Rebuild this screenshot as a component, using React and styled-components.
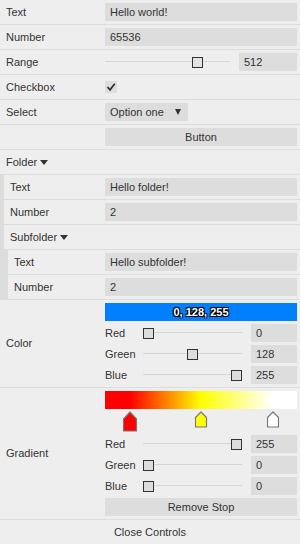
import React from "react";
import styled, { createGlobalStyle } from "styled-components";

const GlobalStyle = createGlobalStyle`
  html, body { margin: 0; padding: 0; background: #eeeeee; }
  body { font-family: "Liberation Sans", Arial, sans-serif; font-size: 11px; color: #333; }
  * { box-sizing: border-box; }
`;

const Panel = styled.div`
  width: 300px;
  background: #eeeeee;
  border-bottom: 1px solid #dddddd;
`;

const Row = styled.div`
  display: grid;
  grid-template-columns: ${(p) => p.$labelWidth}px 1fr;
  min-height: 25px;
  border-bottom: 1px solid #dddddd;
  padding-right: 3px;
`;

const Label = styled.div`
  align-self: center;
  padding-left: 6px;
  line-height: 13px;
  white-space: nowrap;
`;

const Value = styled.div`
  padding: 3px 0;
  display: flex;
  flex-direction: column;
  min-width: 0;
`;

const Field = styled.div`
  height: 18px;
  line-height: 18px;
  background: #dddddd;
  padding: 0 5px;
  white-space: nowrap;
  overflow: hidden;
`;

const RangeWrap = styled.div`
  display: grid;
  grid-template-columns: 1fr 58px;
  align-items: center;
  height: 18px;
`;

const Track = styled.div`
  position: relative;
  height: 18px;
  margin-right: 9px;
  &::before {
    content: "";
    position: absolute;
    left: 0;
    right: 0;
    top: 8px;
    height: 1px;
    background: #d6d6d6;
  }
`;

const Thumb = styled.div`
  position: absolute;
  top: 4px;
  width: 11px;
  height: 11px;
  border: 1px solid #333;
  background: ${(p) => p.$fill};
`;

const CheckBox = styled.div`
  margin-top: 3px;
  width: 12px;
  height: 12px;
  background: #dddddd;
  display: flex;
  align-items: center;
  justify-content: center;
`;

const SelectBox = styled.div`
  width: 83px;
  height: 18px;
  background: #dddddd;
  display: flex;
  align-items: center;
  justify-content: space-between;
  padding: 0 7px 0 5px;
`;

const DownTriangle = styled.span`
  display: inline-block;
  width: 0;
  height: 0;
  border-left: ${(p) => p.$w}px solid transparent;
  border-right: ${(p) => p.$w}px solid transparent;
  border-top: ${(p) => p.$h}px solid #333;
  margin-left: ${(p) => p.$ml || 0}px;
`;

const Button = styled.div`
  height: 18px;
  line-height: 18px;
  background: #dddddd;
  text-align: center;
  margin-top: ${(p) => p.$mt || 0}px;
`;

const FolderHeader = styled.div`
  height: 25px;
  border-bottom: 1px solid #dddddd;
  display: flex;
  align-items: center;
  padding-left: 6px;
`;

const FolderBody = styled.div`
  border-left: 4px solid #dddddd;
`;

const ColorBar = styled.div`
  height: 18px;
  background: rgb(0, 128, 255);
  color: #fff;
  font-weight: bold;
  text-align: center;
  line-height: 18px;
  text-shadow: -1px -1px 0 #000, 1px -1px 0 #000, -1px 1px 0 #000, 1px 1px 0 #000, 0 0 2px #000;
`;

const SubRow = styled.div`
  display: grid;
  grid-template-columns: 38px 1fr 46px;
  padding-top: 3px;
  align-items: center;
`;

const SubLabel = styled.div`
  height: 18px;
  line-height: 18px;
`;

const GradientBar = styled.div`
  height: 18px;
  background: linear-gradient(to right, #ff0000 0%, #ff0000 13%, #ffff00 50%, #ffffff 87.5%, #ffffff 100%);
`;

const StopArea = styled.div`
  position: relative;
  height: 23px;
`;

const StopMarker = styled.svg`
  position: absolute;
  top: 2px;
  transform: translateX(-50%);
  display: block;
`;

const CloseBar = styled.div`
  height: 24px;
  line-height: 24px;
  text-align: center;
`;

function TextRow({ label, value, lw }) {
  return (
    <Row $labelWidth={lw}>
      <Label>{label}</Label>
      <Value>
        <Field>{value}</Field>
      </Value>
    </Row>
  );
}

function Slider({ frac, fill = "#dddddd" }) {
  return (
    <Track>
      <Thumb $fill={fill} style={{ left: `calc(${frac * 100}% - ${frac * 11}px)` }} />
    </Track>
  );
}

function ChannelRow({ name, value }) {
  return (
    <SubRow>
      <SubLabel>{name}</SubLabel>
      <Slider frac={value / 255} />
      <Field>{value}</Field>
    </SubRow>
  );
}

function Stop({ pos, color, big }) {
  const w = big ? 15 : 13;
  const h = big ? 21 : 17;
  return (
    <StopMarker width={w} height={h} viewBox={`0 0 ${w} ${h}`} style={{ left: `${pos * 100}%` }}>
      <polygon
        points={`1,${h - 1} 1,${h * 0.38} ${w / 2},1 ${w - 1},${h * 0.38} ${w - 1},${h - 1}`}
        fill={color}
        stroke="#777"
        strokeWidth="1.2"
        strokeLinejoin="round"
      />
    </StopMarker>
  );
}

export default function App() {
  return (
    <>
      <GlobalStyle />
      <Panel>
        <TextRow label="Text" value="Hello world!" lw={105} />
        <TextRow label="Number" value="65536" lw={105} />
        <Row $labelWidth={105}>
          <Label>Range</Label>
          <Value>
            <RangeWrap>
              <Slider frac={0.765} fill="#e4e4e4" />
              <Field>512</Field>
            </RangeWrap>
          </Value>
        </Row>
        <Row $labelWidth={105}>
          <Label>Checkbox</Label>
          <Value>
            <CheckBox>
              <svg width="10" height="10" viewBox="0 0 10 10">
                <polyline points="1.5,5 4,7.8 8.8,1.8" fill="none" stroke="#333" strokeWidth="1.8" />
              </svg>
            </CheckBox>
          </Value>
        </Row>
        <Row $labelWidth={105}>
          <Label>Select</Label>
          <Value>
            <SelectBox>
              <span>Option one</span>
              <DownTriangle $w={3} $h={6} />
            </SelectBox>
          </Value>
        </Row>
        <Row $labelWidth={105}>
          <Label />
          <Value>
            <Button>Button</Button>
          </Value>
        </Row>
        <FolderHeader>
          Folder
          <DownTriangle $w={4} $h={5} $ml={3} />
        </FolderHeader>
        <FolderBody>
          <TextRow label="Text" value="Hello folder!" lw={101} />
          <TextRow label="Number" value="2" lw={101} />
          <FolderHeader>
            Subfolder
            <DownTriangle $w={4} $h={5} $ml={3} />
          </FolderHeader>
          <FolderBody>
            <TextRow label="Text" value="Hello subfolder!" lw={97} />
            <TextRow label="Number" value="2" lw={97} />
          </FolderBody>
        </FolderBody>
        <Row $labelWidth={105}>
          <Label>Color</Label>
          <Value>
            <ColorBar>0, 128, 255</ColorBar>
            <ChannelRow name="Red" value={0} />
            <ChannelRow name="Green" value={128} />
            <ChannelRow name="Blue" value={255} />
          </Value>
        </Row>
        <Row $labelWidth={105}>
          <Label>Gradient</Label>
          <Value>
            <GradientBar />
            <StopArea>
              <Stop pos={0.13} color="#ff0000" big />
              <Stop pos={0.5} color="#ffff00" />
              <Stop pos={0.875} color="#ffffff" />
            </StopArea>
            <ChannelRow name="Red" value={255} />
            <ChannelRow name="Green" value={0} />
            <ChannelRow name="Blue" value={0} />
            <Button $mt={3}>Remove Stop</Button>
          </Value>
        </Row>
        <CloseBar>Close Controls</CloseBar>
      </Panel>
    </>
  );
}
